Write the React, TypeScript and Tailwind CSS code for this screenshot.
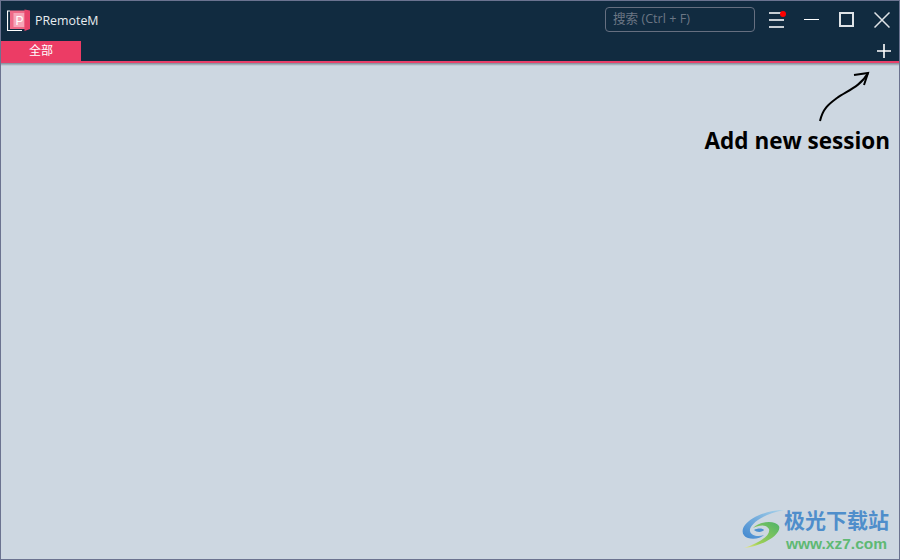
export default function App() {
  return (
    <div className="w-[900px] h-[560px] flex flex-col border border-[#6b7390] bg-[#cdd7e1] overflow-hidden relative" style={{ fontFamily: '"Open Sans","Noto Sans CJK SC",sans-serif' }}>
      <div className="h-[60px] bg-[#112b40] flex flex-col shrink-0">
        <div className="h-[40px] flex items-start">
          <div className="h-[40px] flex items-center w-[604px]">
            <svg width="24" height="24" viewBox="0 0 24 24" className="ml-[6px] shrink-0">
              <path d="M3 2H0.5V21.5H15" fill="none" stroke="#fff" strokeWidth="1.2" />
              <rect x="3" y="1.5" width="15" height="18.5" fill="#ee6a88" />
              <rect x="6.5" y="4" width="11" height="14" fill="#f6a5b8" />
              <path d="M17.5 0.5L23 1.5V20L17.5 22Z" fill="#e8446b" />
              <text x="8.5" y="16" fontSize="12" fill="#fff" fontFamily="Liberation Sans">P</text>
            </svg>
            <span className="ml-[4px] text-[12.4px] text-[#e8edf0]">PRemoteM</span>
          </div>
          <div className="h-[37px] flex items-center">
            <div className="w-[150px] h-[25px] border border-[#666f80] rounded-[4px] flex items-center pl-[7px] text-[12.6px] text-[#6b7684] whitespace-nowrap">搜索 (Ctrl + F)</div>
            <div className="relative ml-[14px] w-[15px] h-[16px] flex flex-col justify-between">
              <div className="h-[2px] bg-[#c8ced4]" />
              <div className="h-[2px] bg-[#c8ced4]" />
              <div className="h-[2px] bg-[#c8ced4]" />
              <div className="absolute -top-[1px] -right-[2px] w-[6px] h-[6px] rounded-full bg-[#ff0000]" />
            </div>
            <div className="ml-[20px] w-[15px] h-[1px] bg-white" />
            <div className="ml-[20px] w-[15px] h-[15px] border-2 border-[#dfe3e7]" />
            <svg width="16" height="16" viewBox="0 0 16 16" className="ml-[20px]"><path d="M0.5 0.5L15.5 15.5M15.5 0.5L0.5 15.5" stroke="#dfe3e7" strokeWidth="1.5" /></svg>
          </div>
        </div>
        <div className="h-[20px] flex items-end justify-between">
          <div className="w-[80px] h-[20px] bg-[#ec3c65] text-white text-[12px] flex items-center justify-center">全部</div>
          <svg width="14" height="14" viewBox="0 0 14 14" className="mr-[8px] mb-[3px]"><path d="M7 0V14M0 7H14" stroke="#fff" strokeWidth="1.6" /></svg>
        </div>
      </div>
      <div className="h-[2px] bg-[#e8406a] shrink-0" />
      <div className="h-[3px] bg-gradient-to-b from-[#7f8a96] to-[#cdd7e1] shrink-0" />
      <div className="relative flex-1">
        <svg width="60" height="60" viewBox="0 0 60 60" className="absolute right-[24px] top-0">
          <path d="M5 55C8 42 14 38 22 32C32 25 46 20 53 7" fill="none" stroke="#000" strokeWidth="2" />
          <path d="M39 9L53 7L49 19" fill="none" stroke="#000" strokeWidth="2" />
        </svg>
        <div className="absolute right-[9px] top-[59px] text-[22.5px] font-bold text-black leading-[32px] whitespace-nowrap">Add new session</div>
        <div className="absolute right-[10px] bottom-[6px] flex items-center">
          <svg width="44" height="44" viewBox="7 6 44 44" className="mr-[-1px]">
            <defs>
              <linearGradient id="b" x1="0" y1="1" x2="1" y2="0">
                <stop offset="0" stopColor="#3f86cf" />
                <stop offset="1" stopColor="#a9d3ea" />
              </linearGradient>
              <linearGradient id="g" x1="1" y1="0" x2="0" y2="1">
                <stop offset="0" stopColor="#4fb36a" />
                <stop offset="0.7" stopColor="#9ccf55" />
                <stop offset="1" stopColor="#efe88a" />
              </linearGradient>
            </defs>
            <path d="M50 7C35 7 18 13 11 22C7 27 8 33 14 35C20 37 27 35 30 32C24 34 17 33 16 28C15 22 28 11 50 7Z" fill="url(#b)" />
            <path d="M19 25C26 18 41 17 45 23C48 31 30 43 10 45C24 40 37 33 35 26C32 21 25 22 19 25Z" fill="url(#g)" />
            <path d="M20 27C23 25 29 25 30 27C29 29 23 30 20 27Z" fill="#4a8fd0" />
          </svg>
          <div className="flex flex-col items-center" style={{ fontFamily: '"Liberation Sans","Noto Sans CJK SC",sans-serif' }}>
            <div className="text-[21px] leading-[24px] font-bold text-[#4f8ecb] whitespace-nowrap">极光下载站</div>
            <div className="mt-[2px] text-[15.5px] leading-[18px] text-[#5fb974] font-bold whitespace-nowrap">www.xz7.com</div>
          </div>
        </div>
      </div>
    </div>
  );
}
